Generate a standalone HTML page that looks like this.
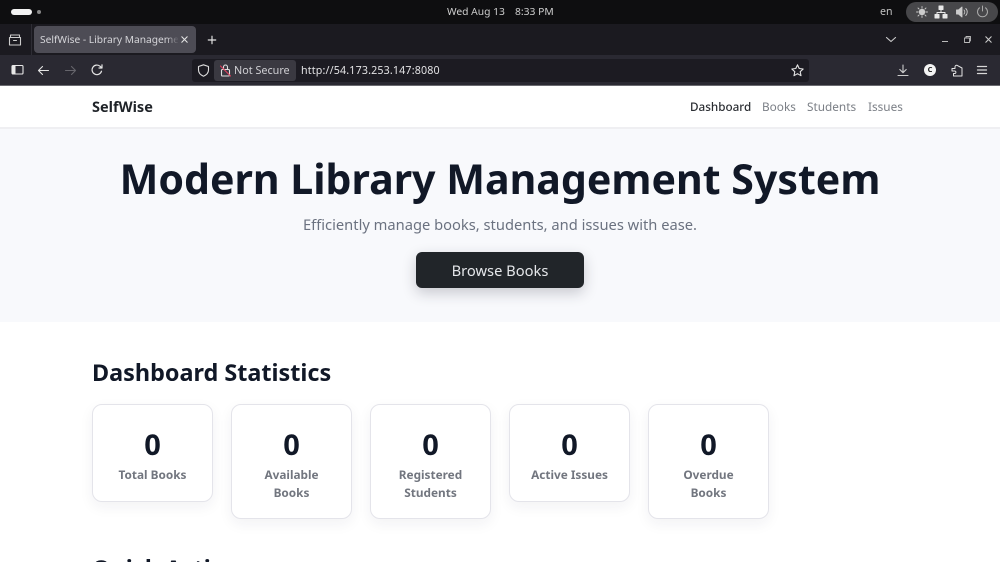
<!DOCTYPE html>
<html><head><meta charset="utf-8"><style>
html,body{margin:0;padding:0;width:1000px;height:562px;overflow:hidden;background:#fff;font-family:"Noto Sans","Liberation Sans","Noto Sans CJK SC",sans-serif}
#w{position:relative;width:1000px;height:562px;overflow:hidden;background:#fff}
.a{position:absolute}
.t{position:absolute;white-space:nowrap;line-height:20px;height:20px}
.c{text-align:center}
.card{position:absolute;top:404px;width:119px;background:#fff;border:1px solid #e4e4ea;border-radius:10px;box-shadow:0 5px 14px rgba(30,30,60,.06)}
.n{position:absolute;width:121px;text-align:center;top:430px;font-size:29px;line-height:30px;font-weight:700;color:#111827}
.l{position:absolute;width:121px;text-align:center;font-size:11.8px;font-weight:700;color:#72767f;line-height:17.5px;top:467px}
svg{position:absolute;fill:none;stroke-linecap:round;stroke-linejoin:round}
</style></head><body><div id="w">
<div class="a" style="left:0;top:0;width:1000px;height:24px;background:#0e0e10"></div>
<div class="a" style="left:0;top:24px;width:1000px;height:31px;background:#1b1a20"></div>
<div class="a" style="left:0;top:55px;width:1000px;height:30px;background:#2a2932"></div>
<div class="a" style="left:0;top:85px;width:1000px;height:1px;background:#6a6a70"></div>

<div class="a" style="left:11px;top:9px;width:21px;height:6px;border-radius:3px;background:#f2f2f2"></div>
<div class="a" style="left:37px;top:10px;width:4px;height:4px;border-radius:2px;background:#888"></div>
<div class="t" style="left:447px;top:2px;font-size:10.3px;color:#d0d0d0">Wed Aug 13</div>
<div class="t" style="left:515px;top:2px;font-size:10.3px;color:#d0d0d0">8:33 PM</div>
<div class="t" style="left:880px;top:2px;font-size:10.6px;color:#c0c0c0">en</div>
<div class="a" style="left:906px;top:2px;width:92px;height:20px;border-radius:10px;background:#47474a"></div>
<svg style="left:914px;top:4px" width="16" height="16" viewBox="0 0 16 16" stroke="#ccc" stroke-width=".9"><circle cx="8" cy="8" r="2.800" fill="#ccc"/><path d="M8 2.500v1.500M8 12v1.500M2.500 8h1.500M12 8h1.500M4 4l1.100 1.100M10.900 10.900L12 12M4 12l1.100-1.100M10.900 5.100L12 4"/></svg>
<svg style="left:934px;top:5px" width="14" height="14" viewBox="0 0 14 14" stroke="#e8e8e8" stroke-width="1"><rect x="5" y="1" width="4" height="3.500" fill="#e8e8e8"/><rect x="1" y="9.500" width="4" height="3.500" fill="#e8e8e8"/><rect x="9" y="9.500" width="4" height="3.500" fill="#e8e8e8"/><path d="M7 4.500v3M3 9.500v-2h8v2"/></svg>
<svg style="left:955px;top:5px" width="14" height="14" viewBox="0 0 14 14" stroke="#ccc" stroke-width=".9"><path d="M1.500 5h2l3.500-3v10l-3.500-3h-2z" fill="#ccc"/><path d="M9 5a3 3 0 0 1 0 4M10.800 3.500a5 5 0 0 1 0 7"/></svg>
<svg style="left:975px;top:4px" width="15" height="15" viewBox="0 0 15 15" stroke="#aaa" stroke-width="1"><path d="M7.500 2v5M4.500 3.800a5 5 0 1 0 6 0"/></svg>

<svg style="left:7px;top:32px" width="16" height="16" viewBox="0 0 16 16" stroke="#ccc" stroke-width="1.100"><path d="M2.500 5.500h11v7.500h-11zM3.500 5.500v-2.500h9v2.500M6.500 8.500h3"/></svg>
<div class="a" style="left:31px;top:24px;width:1px;height:31px;background:#2e2d35"></div>
<div class="a" style="left:34px;top:26px;width:162px;height:27px;border-radius:4px;background:#4d4c55"></div>
<div class="t" style="left:40px;top:29px;font-size:10.2px;color:#d6d6da;width:138px;overflow:hidden">SelfWise - Library Management</div>
<div class="a" style="left:166px;top:26px;width:13px;height:27px;background:linear-gradient(90deg,rgba(77,76,85,0),#4d4c55)"></div>
<svg style="left:180px;top:35px" width="9" height="9" viewBox="0 0 10 10" stroke="#e4e4e4" stroke-width="1.200"><path d="M2 2l6 6M8 2l-6 6"/></svg>
<svg style="left:207px;top:35px" width="10" height="10" viewBox="0 0 12 12" stroke="#e4e4e4" stroke-width="1.400"><path d="M6 1.500v9M1.500 6h9"/></svg>
<svg style="left:885px;top:35px" width="12" height="10" viewBox="0 0 12 10" stroke="#ccc" stroke-width="1.100"><path d="M1.500 2.500L6 6.500l4.500-4"/></svg>
<div class="a" style="left:942px;top:41px;width:6px;height:1px;background:#bbb"></div>
<svg style="left:963px;top:35px" width="9" height="9" viewBox="0 0 9 9" stroke="#bbb" stroke-width=".9"><path d="M1.500 3h5v4.500h-5zM3 3V1.500h4.500V6"/></svg>
<svg style="left:984px;top:35px" width="9" height="9" viewBox="0 0 10 10" stroke="#ccc" stroke-width="1.200"><path d="M2 2l6 6M8 2l-6 6"/></svg>

<svg style="left:11px;top:64px" width="13" height="12" viewBox="0 0 13 12" stroke="#e8e8e8" stroke-width="1.100"><rect x="1" y="1.500" width="11" height="8.500" rx="1"/><rect x="1.500" y="2" width="3" height="7.500" fill="#e8e8e8" stroke="none"/></svg>
<svg style="left:37px;top:64px" width="13" height="13" viewBox="0 0 13 13" stroke="#e4e4e4" stroke-width="1.100"><path d="M11.500 6.500h-10M5.500 2.500l-4 4 4 4"/></svg>
<svg style="left:64px;top:64px" width="13" height="13" viewBox="0 0 13 13" stroke="#66656c" stroke-width="1.100"><path d="M1.500 6.500h10M7.500 2.500l4 4-4 4"/></svg>
<svg style="left:90px;top:63px" width="14" height="14" viewBox="0 0 14 14" stroke="#e4e4e4" stroke-width="1.200"><path d="M11.500 8.200A4.800 4.800 0 1 1 10 3.200L12 5V1.800M12 5H9"/></svg>

<div class="a" style="left:192px;top:59px;width:617px;height:23px;background:#1c1b22;border-radius:3px"></div>
<svg style="left:196px;top:63px" width="15" height="15" viewBox="0 0 15 15" stroke="#ddd" stroke-width="1.100"><path d="M7.500 1.800l5 1.700v3.500c0 3-2.200 5-5 6.200-2.800-1.200-5-3.200-5-6.200V3.500z"/></svg>
<div class="a" style="left:214px;top:60px;width:82px;height:21px;border-radius:3px;background:#3a3941"></div>
<svg style="left:219px;top:63px" width="13" height="15" viewBox="0 0 13 15" stroke="#e0e0e0" stroke-width="1.100"><rect x="2.500" y="6.500" width="8" height="6.500" rx="1"/><path d="M4.500 6.500V4a2 2 0 0 1 4 0v2.500"/><path d="M1.500 3l10 10" stroke="#e0405e"/></svg>
<div class="t" style="left:234px;top:61px;font-size:10.800px;color:#cfcfd3">Not Secure</div>
<div class="t" style="left:301px;top:61px;font-size:10.700px;color:#e2e2e4;letter-spacing:.15px">http://54.173.253.147:8080</div>
<svg style="left:790px;top:63px" width="15" height="15" viewBox="0 0 15 15" stroke="#e4e4e4" stroke-width="1.100"><path d="M7.500 1.800l1.700 3.700 4 .5-3 2.700.8 4-3.500-2-3.500 2 .8-4-3-2.700 4-.5z"/></svg>
<svg style="left:896px;top:63px" width="14" height="15" viewBox="0 0 14 15" stroke="#ccc" stroke-width="1.100"><path d="M7 2v7.500M3.800 6.500L7 9.700l3.200-3.200M2 12.500h10"/></svg>
<div class="a" style="left:924px;top:64px;width:12px;height:12px;border-radius:6px;background:#f4f4f4"></div>
<div class="t" style="left:924px;top:60px;width:12px;text-align:center;font-size:7.500px;font-weight:700;color:#222">C</div>
<svg style="left:950px;top:63px" width="14" height="15" viewBox="0 0 14 15" stroke="#e4e4e4" stroke-width="1"><path d="M2 5.500h3V4a1.700 1.700 0 0 1 2-1.700L12 5v8H3.500v-2.500H5a1.300 1.300 0 0 0 0-2.500H2z"/></svg>
<svg style="left:976px;top:64px" width="12" height="12" viewBox="0 0 12 12" stroke="#d8d8d8" stroke-width="1.300"><path d="M1.500 2.500h9M1.500 6h9M1.500 9.500h9"/></svg>

<div class="a" style="left:0;top:86px;width:1000px;height:41px;background:#fff"></div>
<div class="a" style="left:0;top:127px;width:1000px;height:2px;background:#efeff2"></div>
<div class="a" style="left:0;top:129px;width:1000px;height:193px;background:#f8f9fc"></div>
<div class="t" style="left:92px;top:97px;font-size:14.500px;font-weight:700;color:#1f2328">SelfWise</div>
<div class="t" style="left:690px;top:97px;font-size:11.700px;font-weight:500;color:#2a2d32">Dashboard</div>
<div class="t" style="left:762px;top:97px;font-size:11.800px;color:#7b7f86">Books</div>
<div class="t" style="left:807px;top:97px;font-size:11.800px;color:#7b7f86">Students</div>
<div class="t" style="left:868px;top:97px;font-size:11.800px;color:#7b7f86">Issues</div>

<div class="t c" style="left:0;width:1000px;top:154px;height:50px;line-height:50px;font-size:41.100px;font-weight:700;color:#111827">Modern Library Management System</div>
<div class="t c" style="left:0;width:1000px;top:215px;font-size:14.700px;color:#6b7280">Efficiently manage books, students, and issues with ease.</div>
<div class="a" style="left:416px;top:252px;width:168px;height:36px;border-radius:6px;background:#212529;box-shadow:0 5px 14px rgba(30,30,50,.22)"></div>
<div class="t c" style="left:416px;width:168px;top:261px;font-size:14.700px;color:#e4e6e9">Browse Books</div>

<div class="t" style="left:92px;top:357px;height:30px;line-height:30px;font-size:23.400px;font-weight:700;color:#111827">Dashboard Statistics</div>
<div class="card" style="left:92px;height:96px"></div>
<div class="card" style="left:231px;height:113px"></div>
<div class="card" style="left:370px;height:113px"></div>
<div class="card" style="left:509px;height:96px"></div>
<div class="card" style="left:648px;height:113px"></div>
<div class="n" style="left:92px">0</div><div class="n" style="left:231px">0</div><div class="n" style="left:370px">0</div><div class="n" style="left:509px">0</div><div class="n" style="left:648px">0</div>
<div class="l" style="left:92px">Total Books</div>
<div class="l" style="left:231px">Available<br>Books</div>
<div class="l" style="left:370px">Registered<br>Students</div>
<div class="l" style="left:509px">Active Issues</div>
<div class="l" style="left:648px">Overdue<br>Books</div>
<div class="t" style="left:92px;top:553px;height:30px;line-height:30px;font-size:23.400px;font-weight:700;color:#111827">Quick Actions</div>
</div></body></html>
